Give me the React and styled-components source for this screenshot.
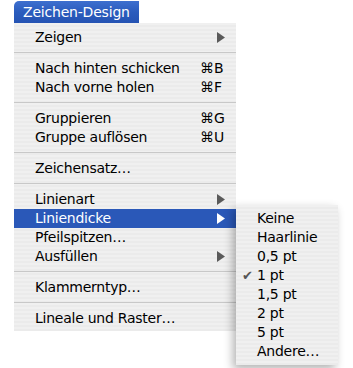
import React from "react";
import styled, { createGlobalStyle } from "styled-components";

const Global = createGlobalStyle`
  html, body {
    margin: 0;
    padding: 0;
    background: #ffffff;
  }
  body {
    font-family: "DejaVu Sans", "Liberation Sans", sans-serif;
  }
`;

const mainItems = [
  { label: "Zeigen", arrow: true },
  { sep: true },
  { label: "Nach hinten schicken", key: "⌘B" },
  { label: "Nach vorne holen", key: "⌘F" },
  { sep: true },
  { label: "Gruppieren", key: "⌘G" },
  { label: "Gruppe auflösen", key: "⌘U" },
  { sep: true },
  { label: "Zeichensatz…" },
  { sep: true },
  { label: "Linienart", arrow: true },
  { label: "Liniendicke", arrow: true, active: true },
  { label: "Pfeilspitzen…" },
  { label: "Ausfüllen", arrow: true },
  { sep: true },
  { label: "Klammerntyp…" },
  { sep: true },
  { label: "Lineale und Raster…" },
];

const subItems = ["Keine", "Haarlinie", "0,5 pt", "1 pt", "1,5 pt", "2 pt", "5 pt", "Andere…"];

const Arrow = ({ light }) => (
  <svg width="8" height="11" viewBox="0 0 8 11">
    <path d="M0 0 L8 5.5 L0 11 Z" fill={light ? "#ffffff" : "#5a5a5a"} />
  </svg>
);

const App = () => {
  return (
    <Page>
      <Global />
      <Title>Zeichen-Design</Title>
      <Menu>
        {mainItems.map((it, i) =>
          it.sep ? (
            <Separator key={i} />
          ) : (
            <Item key={i} $active={it.active}>
              <Label>{it.label}</Label>
              {it.key && <Key>{it.key}</Key>}
              {it.arrow && (
                <ArrowBox>
                  <Arrow light={it.active} />
                </ArrowBox>
              )}
              {it.active && (
                <SubMenu>
                  {subItems.map((s) => (
                    <SubItem key={s}>
                      <Check>{s === "1 pt" ? "✔" : ""}</Check>
                      {s}
                    </SubItem>
                  ))}
                </SubMenu>
              )}
            </Item>
          )
        )}
      </Menu>
    </Page>
  );
};

export default App;

const stripes = `
  background: repeating-linear-gradient(
    #f0f0f0 0px,
    #f0f0f0 2px,
    #ebebeb 2px,
    #ebebeb 4px
  );
`;

const Page = styled.div`
  width: 353px;
  height: 368px;
  padding: 1px 0 0 14px;
  box-sizing: border-box;
  overflow: hidden;
`;

const Title = styled.div`
  width: 125px;
  height: 22px;
  box-sizing: border-box;
  padding-left: 9px;
  display: flex;
  align-items: center;
  color: #ffffff;
  font-size: 14px;
  letter-spacing: -0.2px;
  background: linear-gradient(#3d6fcf, #2b5cbd 50%, #2553b3);
  border-top-left-radius: 5px;
`;

const Menu = styled.div`
  width: 222px;
  padding: 4.5px 0 3.5px;
  ${stripes}
`;

const Item = styled.div`
  position: relative;
  height: 19px;
  display: flex;
  align-items: center;
  padding-left: 21px;
  font-size: 14px;
  color: ${(p) => (p.$active ? "#ffffff" : "#000000")};
  background: ${(p) => (p.$active ? "#2a58b8" : "transparent")};
`;

const Label = styled.span`
  flex: 1;
  white-space: nowrap;
  letter-spacing: -0.25px;
`;

const Key = styled.span`
  width: 36px;
  font-size: 14px;
`;

const ArrowBox = styled.span`
  width: 19px;
  display: flex;
  align-items: center;
`;

const Separator = styled.div`
  height: 12px;
  display: flex;
  align-items: center;
  &::after {
    content: "";
    flex: 1;
    height: 1px;
    background: #c8c8c8;
  }
`;

const SubMenu = styled.div`
  position: absolute;
  left: 222px;
  top: -3.5px;
  width: 102px;
  padding: 3.5px 0 4px;
  ${stripes}
  box-shadow: -3px 4px 9px rgba(0, 0, 0, 0.3);
  z-index: 2;
`;

const SubItem = styled.div`
  height: 19px;
  display: flex;
  align-items: center;
  color: #000000;
  font-size: 14px;
  letter-spacing: -0.25px;
`;

const Check = styled.span`
  width: 21px;
  padding-left: 6px;
  box-sizing: border-box;
  color: #555555;
  font-size: 13px;
`;
